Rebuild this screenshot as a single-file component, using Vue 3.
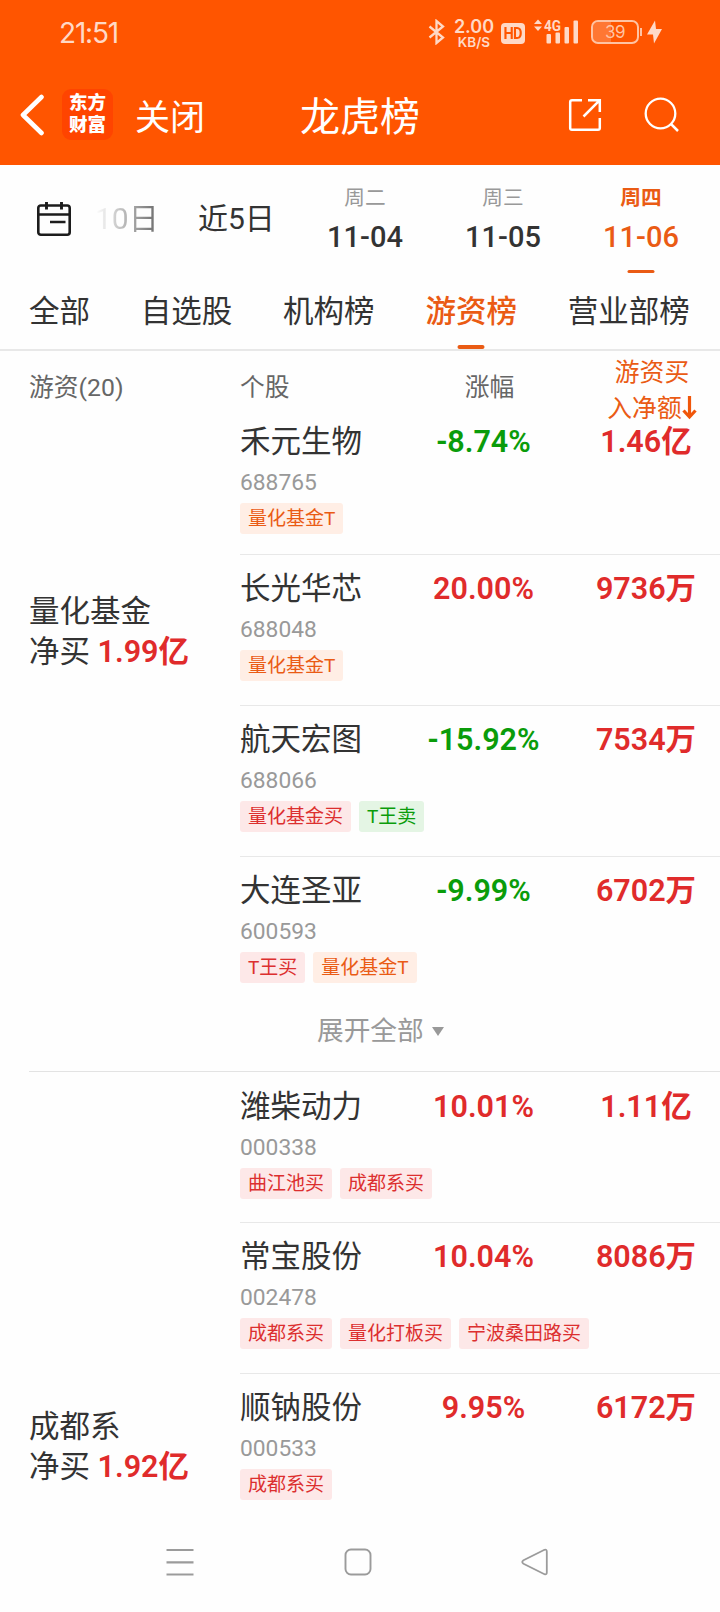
<script setup>
import {ref} from 'vue'

// 当前选中的日期 / 榜单
let curDate = ref('11-06');
let curTab = ref('游资榜');

let dates = [
    {week: '周二', date: '11-04'},
    {week: '周三', date: '11-05'},
    {week: '周四', date: '11-06'},
]
let tabs = ['全部', '自选股', '机构榜', '游资榜', '营业部榜']

// 游资列表 type: t = 做T, buy = 买, sell = 卖
let groups = ref([
    {
        name: '量化基金', net: '1.99亿', more: true,
        stocks: [
            {name: '禾元生物', code: '688765', change: '-8.74%', amount: '1.46亿', tags: [{text: '量化基金T', type: 't'}]},
            {name: '长光华芯', code: '688048', change: '20.00%', amount: '9736万', tags: [{text: '量化基金T', type: 't'}]},
            {name: '航天宏图', code: '688066', change: '-15.92%', amount: '7534万', tags: [{text: '量化基金买', type: 'buy'}, {text: 'T王卖', type: 'sell'}]},
            {name: '大连圣亚', code: '600593', change: '-9.99%', amount: '6702万', tags: [{text: 'T王买', type: 'buy'}, {text: '量化基金T', type: 't'}]},
        ]
    },
    {
        name: '成都系', net: '1.92亿', more: false,
        stocks: [
            {name: '潍柴动力', code: '000338', change: '10.01%', amount: '1.11亿', tags: [{text: '曲江池买', type: 'buy'}, {text: '成都系买', type: 'buy'}]},
            {name: '常宝股份', code: '002478', change: '10.04%', amount: '8086万', tags: [{text: '成都系买', type: 'buy'}, {text: '量化打板买', type: 'buy'}, {text: '宁波桑田路买', type: 'buy'}]},
            {name: '顺钠股份', code: '000533', change: '9.95%', amount: '6172万', tags: [{text: '成都系买', type: 'buy'}]},
        ]
    },
])
</script>
<template>
    <div class="page">
        <header class="top">
            <div class="status">
                <span class="time">21:51</span>
                <div class="status-icons">
                    <svg class="bluetooth" width="17" height="26" viewBox="0 0 17 26"><path d="M1.500 7.500 15 18.500 8.500 24V2L15 7.500 1.500 18.500" fill="none" stroke="#ffd9c6" stroke-width="2.300"/></svg>
                    <div class="speed"><b>2.00</b><span>KB/S</span></div>
                    <span class="hd"><i>HD</i></span>
                    <svg class="signal" width="45" height="32" viewBox="0 -3 45 32" fill="#ffd9c6">
                        <path d="M0 5 4 .5 8 5zM0 7.500h8l-4 4.500z"/>
                        <text x="10" y="11.500" font-size="14.500" font-weight="700" textLength="17" lengthAdjust="spacingAndGlyphs">4G</text>
                        <rect x="12.500" y="15" width="4.500" height="9.500" rx="1"/>
                        <rect x="21.500" y="13.500" width="4.500" height="11" rx="1"/>
                        <rect x="30.500" y="8" width="4.500" height="16.500" rx="1"/>
                        <rect x="39.500" y="1.500" width="4.500" height="23" rx="1"/>
                    </svg>
                    <div class="battery"><span>39</span></div>
                    <svg class="bolt" width="15" height="24" viewBox="0 0 15 24"><path d="M8 .5 0 14.500h6L7 23.500 15 9H9z" fill="#ffd9c6"/></svg>
                </div>
            </div>
            <nav class="bar">
                <svg class="back" width="26" height="42" viewBox="0 0 26 42"><path d="M22.500 3 4 21l18.500 18" fill="none" stroke="#fff" stroke-width="4.600" stroke-linecap="round" stroke-linejoin="round"/></svg>
                <div class="logo">东方<br>财富</div>
                <span class="close">关闭</span>
                <h1>龙虎榜</h1>
                <svg class="share" width="34" height="34" viewBox="0 0 34 34"><path d="M14 2.200H4Q2.200 2.200 2.200 4v26q0 1.800 1.800 1.800h26q1.800 0 1.800-1.800V20M20 2.200h11.800V14M31.800 2.200 15.500 18.500" fill="none" stroke="#fff" stroke-width="2.500"/></svg>
                <svg class="search" width="36" height="36" viewBox="0 0 36 36"><circle cx="16.500" cy="16.500" r="14.800" fill="none" stroke="#fff" stroke-width="2.300"/><path d="m27 27 7 7" stroke="#fff" stroke-width="2.500"/></svg>
            </nav>
        </header>

        <section class="dates">
            <svg class="calendar" width="36" height="36" viewBox="0 0 36 36" fill="none" stroke="#1c1c1c" stroke-width="2.600"><rect x="2.300" y="4.500" width="31.400" height="29.200" rx="2.500"/><path d="M2 13.500h32M14 21h15.500" /><path d="M10.500 1v7.500M25.500 1v7.500" stroke-width="2.900"/></svg>
            <div class="faded">10日</div>
            <div class="recent">近5日</div>
            <div class="day" v-for="d in dates" :key="d.date" :class="{active: curDate == d.date}" @click="curDate = d.date">
                <span class="week">{{d.week}}</span>
                <span class="date">{{d.date}}</span>
            </div>
        </section>

        <section class="tabs">
            <div class="tab" v-for="t in tabs" :key="t" :class="{active: curTab == t}" @click="curTab = t">{{t}}</div>
        </section>

        <section class="table-head">
            <span class="col-group">游资(20)</span>
            <span class="col-name">个股</span>
            <span class="col-change">涨幅</span>
            <span class="col-amount">游资买<br><span class="sort">入净额<svg width="15" height="24" viewBox="0 0 15 24"><path d="M7.500 0v20M1.500 14.500l6 6.500 6-6.500" fill="none" stroke="#f0560a" stroke-width="3.200"/></svg></span></span>
        </section>

        <main>
            <section class="group" v-for="g in groups" :key="g.name">
                <div class="owner">
                    <div>{{g.name}}</div>
                    <div>净买 <b>{{g.net}}</b></div>
                </div>
                <div class="stocks">
                    <article class="stock" v-for="s in g.stocks" :key="s.code">
                        <div class="line">
                            <span class="name">{{s.name}}</span>
                            <span class="change" :class="{down: s.change.startsWith('-')}">{{s.change}}</span>
                            <span class="amount">{{s.amount}}</span>
                        </div>
                        <div class="code">{{s.code}}</div>
                        <div class="tags">
                            <span class="tag" v-for="tag in s.tags" :key="tag.text" :class="tag.type">{{tag.text}}</span>
                        </div>
                    </article>
                    <div class="more" v-if="g.more">展开全部<span class="caret"></span></div>
                </div>
            </section>
        </main>

        <footer class="sysbar">
            <svg width="28" height="28" viewBox="0 0 28 28"><path d="M.5 2h27M.5 14.300h27M.5 26.500h27" stroke="#9b9b9b" stroke-width="2.200"/></svg>
            <svg width="28" height="28" viewBox="0 0 28 28"><rect x="1.500" y="1.500" width="25" height="25" rx="5.500" fill="none" stroke="#9b9b9b" stroke-width="1.900"/></svg>
            <svg width="28" height="28" viewBox="0 0 28 28"><path d="M23.500 1.800 2.500 12.300q-2.500 1.700 0 3.400l21 10.500q2.300.7 2.300-1.700V3.500q0-2.400-2.300-1.700z" fill="none" stroke="#9b9b9b" stroke-width="1.800"/></svg>
        </footer>
    </div>
</template>
<style>
body {
    margin: 0;
    background: #fff;
}
</style>
<style scoped>
.page {
    width: 720px;
    height: 1612px;
    display: flex;
    flex-direction: column;
    overflow: hidden;
    background: #fefefe;
    color: #333;
    font-family: Roboto, "Noto Sans CJK SC", sans-serif;
}

/* 顶部 */
.top {
    height: 165px;
    flex: none;
    background: #ff5500;
    color: #fff;
}
.status {
    height: 64px;
    display: flex;
    justify-content: space-between;
    padding: 0 58px 0 59px;
    color: #ffd9c6;
}
.time {
    font: 400 28px/66px Inter, sans-serif;
    letter-spacing: -1.2px;
}
.status-icons {
    display: flex;
    align-items: center;
}
.speed {
    display: flex;
    flex-direction: column;
    align-items: center;
    width: 40px;
    margin-left: 9px;
    font-family: Inter, sans-serif;
    padding-top: 3px;
}
.speed b {
    font-size: 18px;
    line-height: 16px;
    font-weight: 600;
}
.speed span {
    font-size: 13.5px;
    line-height: 14px;
    font-weight: 600;
}
.hd {
    width: 24px;
    height: 21px;
    margin: 2px 0 0 7px;
    border-radius: 4px;
    background: #ffd9c6;
    color: #ff5500;
    display: flex;
    align-items: center;
    justify-content: center;
}
.hd i {
    font: 700 17px/21px Roboto, sans-serif;
    letter-spacing: -1px;
    transform: scaleX(0.85);
}
.signal {
    margin-left: 9px;
}
.battery {
    position: relative;
    width: 44px;
    height: 20px;
    margin-left: 12px;
    border: 2px solid #ffc3a3;
    border-radius: 7px;
    background: linear-gradient(90deg, #ff7733 40%, #ff5500 40%) content-box;
    text-align: center;
    font: 400 17px/21px Inter, sans-serif;
    letter-spacing: -0.5px;
    color: #ffc3a3;
}
.battery::after {
    content: "";
    position: absolute;
    right: -5px;
    top: 6px;
    width: 2px;
    height: 8px;
    background: #ffc3a3;
}
.bolt {
    margin-left: 8px;
}
.bar {
    position: relative;
    height: 101px;
    display: flex;
    align-items: center;
    padding-left: 19px;
}
.logo {
    width: 51px;
    height: 51px;
    margin-left: 17px;
    box-sizing: border-box;
    padding-top: 4px;
    border-radius: 9px;
    background: #ff4400;
    text-align: center;
    font-size: 18.5px;
    line-height: 21.5px;
    font-weight: 900;
}
.close {
    margin: 0 0 1px 22px;
    font-size: 35px;
}
.bar h1 {
    position: absolute;
    left: 0;
    right: 0;
    top: 26px;
    margin: 0;
    text-align: center;
    font-size: 40px;
    line-height: 56px;
    font-weight: 400;
}
.share {
    margin-left: auto;
}
.search {
    margin: 1px 40px 0 42px;
}

/* 日期 */
.dates {
    height: 110px;
    flex: none;
    display: flex;
}
.calendar {
    margin: 36px 0 0 36px;
}
.faded {
    margin: 34px 0 0 23px;
    width: 65px;
    font-size: 30px;
    line-height: 40px;
    background: linear-gradient(90deg, #fff 0, #666 100%);
    background-clip: text;
    -webkit-background-clip: text;
    color: transparent;
}
.recent {
    width: 98px;
    margin: 34px 0 0 38px;
    font-size: 30px;
    line-height: 40px;
}
.day {
    position: relative;
    width: 138px;
    display: flex;
    flex-direction: column;
    align-items: center;
}
.week {
    margin-top: 17px;
    font-size: 20.7px;
    line-height: 32px;
    color: #999;
}
.date {
    margin-top: 5px;
    font-size: 29px;
    line-height: 36px;
    font-weight: 500;
}
.day.active, .day.active .week {
    color: #ea5b14;
}
.day.active .week {
    font-weight: 600;
}
.day.active::after, .tab.active::after {
    content: "";
    position: absolute;
    left: 50%;
    bottom: 2px;
    width: 27px;
    height: 3px;
    border-radius: 2px;
    transform: translateX(-50%);
    background: #ea5b14;
}

/* 榜单 */
.tabs {
    height: 74px;
    flex: none;
    display: flex;
    gap: 50.8px;
    padding-left: 29px;
    border-bottom: 2px solid #e8e8e8;
}
.tab {
    position: relative;
    font-size: 30.5px;
    line-height: 73px;
    white-space: nowrap;
}
.tab.active {
    color: #ea5b14;
    font-weight: 500;
}
.tab.active::after {
    bottom: 0;
    height: 4px;
}

/* 表头 */
.table-head {
    height: 57px;
    flex: none;
    display: flex;
    font-size: 24.8px;
    line-height: 74px;
    color: #666;
}
.table-head > span {
    flex: none;
    box-sizing: border-box;
}
.col-group {
    width: 240px;
    padding-left: 29px;
}
.col-name {
    width: 163px;
}
.col-change {
    width: 173px;
    text-align: center;
}
.col-amount {
    width: 144px;
    padding: 4px 0 0 8px;
    text-align: center;
    line-height: 35.5px;
    color: #ea5b14;
}
.sort {
    display: inline-flex;
    align-items: center;
}

/* 列表 */
.group {
    display: flex;
    margin-left: 29px;
    border-bottom: 1px solid #e3e3e3;
}
.group:last-child {
    border-bottom: 0;
}
.owner {
    width: 211px;
    padding-top: 184px;
    font-size: 30.5px;
    line-height: 40px;
}
.group:last-child .owner {
    padding-top: 335px;
}
.owner b, .change, .amount {
    color: #e02b2b;
    font-weight: 600;
}
.stocks {
    flex: 1;
}
.stock {
    padding: 14px 0 24px;
    border-bottom: 1px solid #e8e8e8;
}
.group:first-child .stock:first-child {
    padding-bottom: 20px;
}
.group:last-child .stock:first-child {
    padding: 15px 0 23px;
}
.stock:nth-last-child(2):nth-child(4), .group:last-child .stock:last-child {
    border-bottom: 0;
}
.line {
    display: flex;
    font-size: 30.5px;
    line-height: 40px;
}
.name {
    width: 163px;
}
.change {
    width: 161px;
    text-align: center;
}
.change.down {
    color: #0a9c0a;
}
.amount {
    width: 146px;
    margin-left: 9px;
    text-align: center;
}
.code {
    margin-top: 3px;
    font-size: 22.8px;
    line-height: 36px;
    color: #999;
}
.tags {
    display: flex;
    gap: 8px;
    margin-top: 2px;
}
.tag {
    padding: 0 8px;
    border-radius: 3px;
    font-size: 19px;
    line-height: 31px;
    white-space: nowrap;
}
.tag.t {
    background: #ffeee5;
    color: #ea5b14;
}
.tag.buy {
    background: #fde8e8;
    color: #dc2f2f;
}
.tag.sell {
    background: #e4f5e4;
    color: #0a9c0a;
}
.more {
    display: flex;
    align-items: center;
    height: 49px;
    padding: 0 0 15px 77px;
    font-size: 26.7px;
    line-height: 49px;
    color: #999;
}
.caret {
    margin-left: 8px;
    border: 6px solid transparent;
    border-top: 9px solid #999;
    border-bottom: 0;
}

/* 系统导航 */
.sysbar {
    display: flex;
    flex: none;
    gap: 149.5px;
    margin-top: auto;
    padding: 24px 0 36px 166px;
    background: #fefefe;
}
</style>
